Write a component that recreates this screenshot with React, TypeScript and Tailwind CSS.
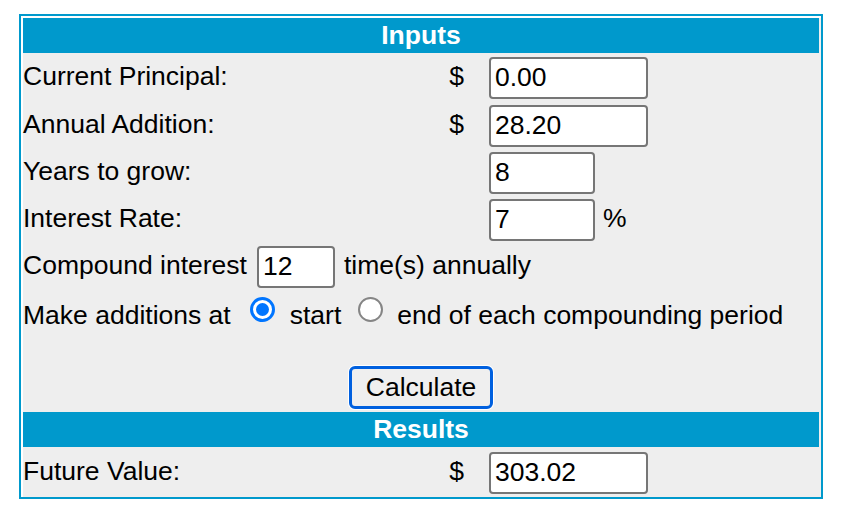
import React from "react";

const font = "font-['Liberation_Sans',Arial,sans-serif]";

function TextBox({ value, width }: { value: string; width: string }) {
  return (
    <div
      className={`${width} h-[42px] flex items-center bg-white border-2 border-[#767676] rounded-[4px] px-[4px] text-black`}
    >
      {value}
    </div>
  );
}

function Radio({ checked }: { checked?: boolean }) {
  if (checked) {
    return (
      <span className="inline-block align-baseline w-[25px] h-[25px] mb-[2px] p-[3px] rounded-full border-[3px] border-[#0075ff] bg-white">
        <span className="block w-[13px] h-[13px] rounded-full bg-[#0075ff]" />
      </span>
    );
  }
  return (
    <span className="inline-block align-baseline w-[25px] h-[25px] mb-[2px] rounded-full border-2 border-[#858585] bg-white" />
  );
}

function Band({ title }: { title: string }) {
  return (
    <div className="h-[35px] mr-[2px] bg-[#0099cc] text-white font-bold flex items-center justify-center">
      {title}
    </div>
  );
}

// label | "$" | input
function FieldRow({
  label,
  value,
  dollar,
  width,
  suffix,
  tall,
}: {
  label: string;
  value: string;
  dollar?: boolean;
  width: string;
  suffix?: string;
  tall?: boolean;
}) {
  return (
    <div className={`flex items-center ${tall ? "h-[48px] pb-[2px]" : "h-[47px] pb-[1px]"} pt-[4px]`}>
      <div className="w-[417px] pb-[2px]">{label}</div>
      <div className="w-[49px] pr-[25px] text-right pb-[2px]">{dollar ? "$" : ""}</div>
      <TextBox value={value} width={width} />
      {suffix && <span className="ml-[8px] pb-[2px]">{suffix}</span>}
    </div>
  );
}

export default function App() {
  return (
    <div className={`min-h-screen bg-white pt-[14px] pl-[19px] ${font} text-[26.5px] text-black`}>
      <div className="w-[804px] h-[485px] border-2 border-[#0099cc] bg-white">
        <div className="ml-[2px] mt-[2px] h-[479px] bg-[#eeeeee] flex flex-col">
          <Band title="Inputs" />

          <FieldRow label="Current Principal:" value="0.00" dollar width="w-[159px]" tall />
          <FieldRow label="Annual Addition:" value="28.20" dollar width="w-[159px]" />
          <FieldRow label="Years to grow:" value="8" width="w-[106px]" />
          <FieldRow label="Interest Rate:" value="7" width="w-[106px]" suffix="%" />

          <div className="flex items-center h-[47px] pt-[4px] pb-[1px]">
            <span className="pb-[2px]">Compound interest</span>
            <div className="ml-[10px] mr-[9px]">
              <TextBox value="12" width="w-[78px]" />
            </div>
            <span className="pb-[2px]">time(s) annually</span>
          </div>

          <div className="h-[47px] pt-[6px] leading-[40px] whitespace-nowrap">
            Make additions at
            <span className="ml-[19px] mr-[15px]">
              <Radio checked />
            </span>
            start
            <span className="ml-[17px] mr-[14px]">
              <Radio />
            </span>
            end of each compounding period
          </div>

          <div className="h-[76px] flex items-end justify-center pb-[3px]">
            <button className="w-[144px] h-[43px] mr-[2px] bg-[#efefef] border-[3px] border-[#0060df] rounded-[6px] ring-1 ring-white text-black leading-none">
              Calculate
            </button>
          </div>

          <Band title="Results" />

          <div className="flex items-center h-[50px] pt-[5px] pb-[3px]">
            <div className="w-[417px] pb-[2px]">Future Value:</div>
            <div className="w-[49px] pr-[25px] text-right pb-[2px]">$</div>
            <TextBox value="303.02" width="w-[159px]" />
          </div>
        </div>
      </div>
    </div>
  );
}
